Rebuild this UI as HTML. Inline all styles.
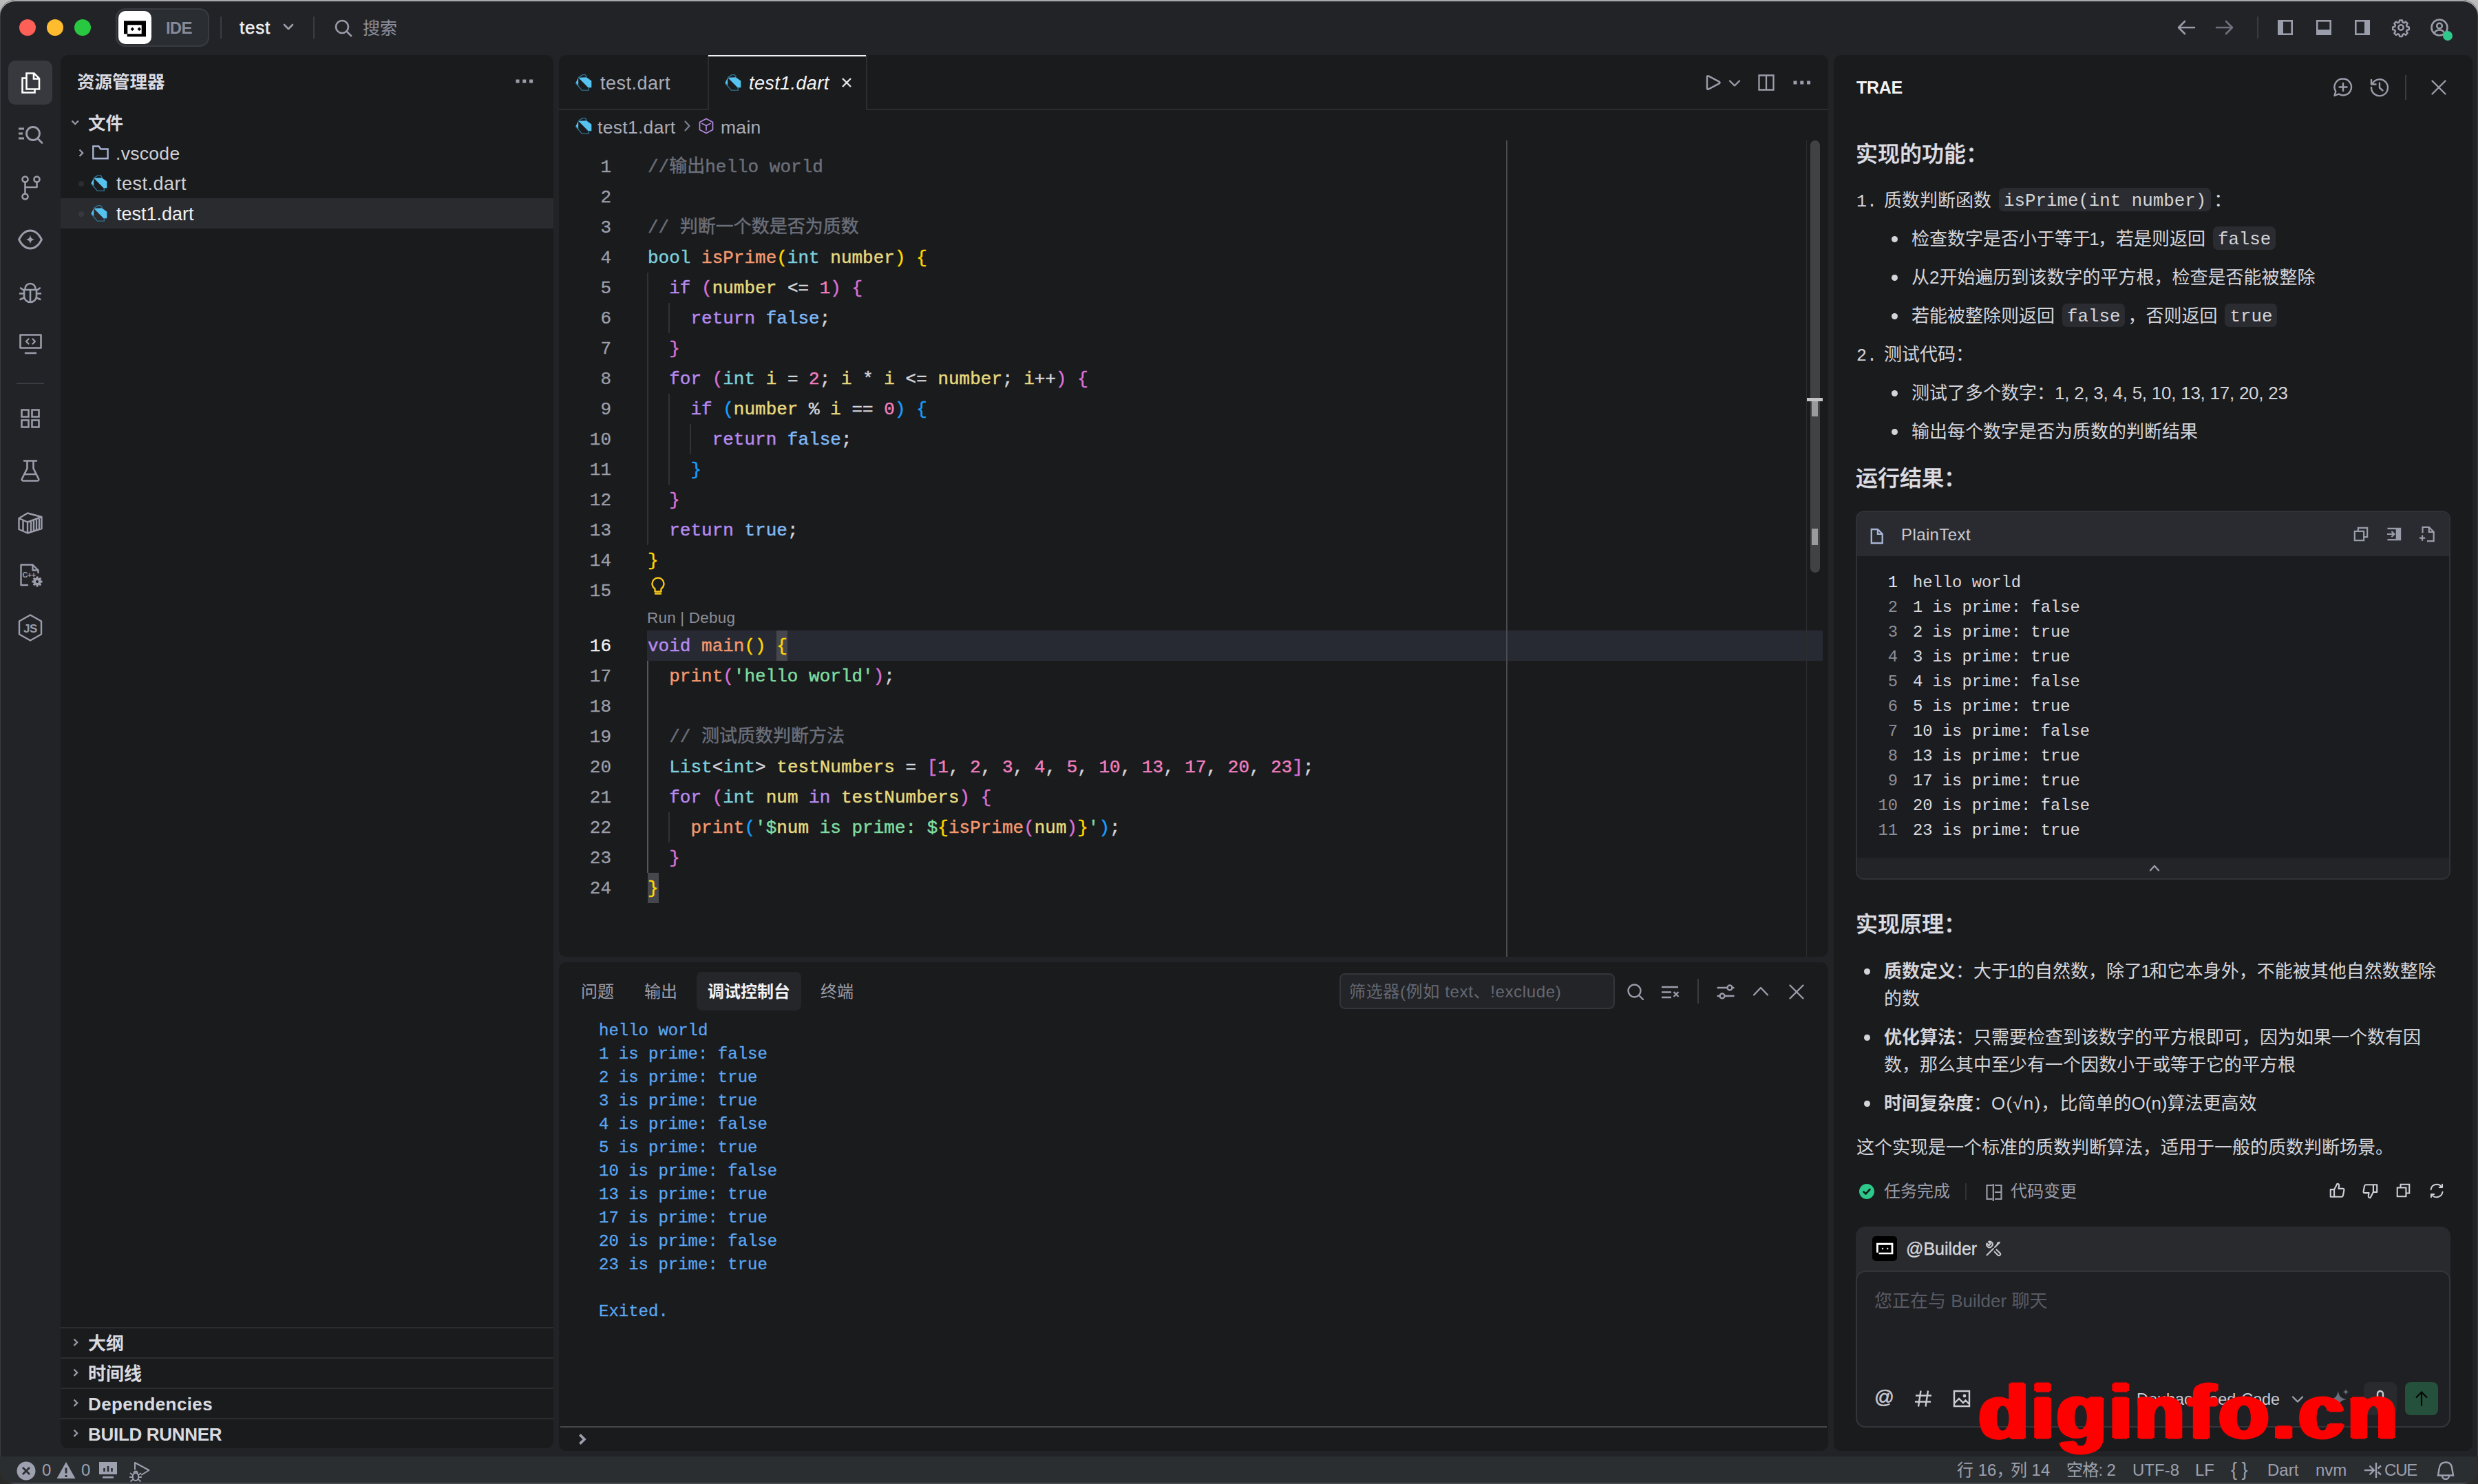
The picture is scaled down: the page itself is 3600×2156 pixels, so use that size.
<!DOCTYPE html>
<html lang="zh-CN">
<head>
<meta charset="utf-8">
<title>test1.dart — test</title>
<style>
*{box-sizing:border-box;margin:0;padding:0}
html,body{width:3600px;height:2156px;overflow:hidden;background:linear-gradient(#bdbdbd,#9a9a9a 3%,#2a2a28 97%)}
body{font-family:"Liberation Sans","Noto Sans CJK SC",sans-serif;color:#d4d5db;-webkit-font-smoothing:antialiased}
#win{position:absolute;left:0;top:0;width:3600px;height:2156px;background:#222327;border-radius:22px 22px 22px 22px;overflow:hidden;box-shadow:inset 0 2px 0 #a9a9ab, inset 1px 0 0 #3a3c41, inset -1px 0 0 #3a3c41}
.abs{position:absolute}
.t{position:absolute;white-space:nowrap;line-height:1}
.panel{position:absolute;background:#1a1b1d;border-radius:11px}
svg{position:absolute;overflow:visible}
.ic{fill:none;stroke:#9a9daa;stroke-width:2.6;stroke-linecap:round;stroke-linejoin:round}
.mono{font-family:"Liberation Mono","Noto Sans CJK SC",monospace}
.b{font-weight:bold}
/* code colors */
.cm{color:#6b6f7a}.ty{color:#7dd0dc}.fn{color:#f2996f}.va{color:#e6d97e}.kw{color:#b78af0}.bo{color:#7eb8f7}.nu{color:#f07fbf}.st{color:#7fdca0}
.b1{color:#ffd700}.b2{color:#da70d6}.b3{color:#179fff}.op{color:#d4d5db}
.ln{position:absolute;left:812px;width:76px;text-align:right;font-size:26px;line-height:46px;-webkit-text-stroke:.3px;height:44px;color:#9c9faa;white-space:pre}
.cl{position:absolute;left:941px;font-size:26px;line-height:46px;-webkit-text-stroke:.45px;height:44px;white-space:pre;color:#d4d5db}
.ig{position:absolute;width:2px;background:#303236}
.con{position:absolute;left:870px;font-size:24px;line-height:38px;-webkit-text-stroke:.3px;height:34px;white-space:pre;color:#5ba6f2}
.rl{position:absolute;font-size:26px;line-height:40px;white-space:nowrap;color:#d4d5db}
.h3{position:absolute;left:2696px;font-size:32px;font-weight:500;line-height:43px;color:#dcdde3;white-space:nowrap;-webkit-text-stroke:.4px}
.icode{font-family:"Liberation Mono",monospace;font-size:25.8px;background:#2a2c31;border-radius:7px;padding:4.600px 7px .6px 7px;margin:0 4px;position:relative;top:-1.400px}
.n1{margin:0 -1.800px}
.dot{position:absolute;width:9px;height:9px;border-radius:50%;background:#d4d5db}
.pl{position:absolute;font-size:23.8px;line-height:38px;height:36px;white-space:pre;color:#d9dae0}
.pn{position:absolute;left:2697px;width:60px;text-align:right;font-size:23.8px;line-height:38px;height:36px;color:#8b8e99}
.sb{position:absolute;font-size:24px;line-height:40px;top:2116px;color:#9da0ae;white-space:nowrap}
</style>
</head>
<body>
<div id="win">
<svg width="0" height="0" style="position:absolute"><defs>
<g id="dartico"><path d="M4.200 4.700L16 4.200l7.300 5.300v9.700h-4.800z" fill="#55c2f0"/><path d="M0.300 12.500l3.900-7.800v12.500z" fill="#55c2f0"/><path d="M4.200 4.700l6.300-4.100h3.700l2.300 3.600M.5 12.800l8.800 10.300h10v-4" fill="none" stroke="#2f7191" stroke-width="1.400" stroke-linejoin="round"/></g>
</defs></svg>
<!-- ===== title bar ===== -->
<div class="abs" style="left:28px;top:28px;width:24px;height:24px;border-radius:50%;background:#fe5f57"></div>
<div class="abs" style="left:68px;top:28px;width:24px;height:24px;border-radius:50%;background:#febc2e"></div>
<div class="abs" style="left:108px;top:28px;width:24px;height:24px;border-radius:50%;background:#28c840"></div>
<div class="abs" style="left:168px;top:12px;width:136px;height:56px;border-radius:14px;background:#2a2d31;border:2px solid #383b40"></div>
<div class="abs" style="left:172px;top:16px;width:48px;height:48px;border-radius:10px;background:#fff"></div>
<svg style="left:172px;top:16px" width="48" height="48" viewBox="0 0 48 48"><path d="M8 14.300h32v23H12.700v-4.100H8z M13.300 20.200v13h20.400v-13z" fill="#000" fill-rule="evenodd"/><path d="M20.300 23.600l2.700 2.700-2.700 2.700-2.700-2.700z M30.300 23.600l2.700 2.700-2.700 2.700-2.700-2.700z" fill="#000"/></svg>
<div class="t" style="left:241px;top:29px;font-size:24px;font-weight:bold;color:#878a99;letter-spacing:-.8px">IDE</div>
<div class="abs" style="left:320px;top:24px;width:2px;height:32px;background:#3a3c42"></div>
<div class="t" style="left:348px;top:27px;font-size:26px;color:#f0f0f3;letter-spacing:.8px;-webkit-text-stroke:.5px">test</div>
<svg style="left:410px;top:33px" width="18" height="12" viewBox="0 0 18 12"><path class="ic" d="M3 3l6 6 6-6"/></svg>
<div class="abs" style="left:455px;top:24px;width:2px;height:32px;background:#3a3c42"></div>
<svg style="left:485px;top:27px" width="28" height="28" viewBox="0 0 28 28"><circle class="ic" cx="12" cy="12" r="9"/><path class="ic" d="M19 19l6 6"/></svg>
<div class="t" style="left:527px;top:29px;font-size:25px;color:#8b8e9c">搜索</div>
<!-- right controls -->
<svg style="left:3162px;top:28px" width="28" height="24" viewBox="0 0 28 24"><path class="ic" d="M26 12H3M12 3l-9 9 9 9"/></svg>
<svg style="left:3218px;top:28px" width="28" height="24" viewBox="0 0 28 24"><path class="ic" style="stroke:#6f727e" d="M2 12h23M16 3l9 9-9 9"/></svg>
<div class="abs" style="left:3279px;top:24px;width:2px;height:32px;background:#3a3c42"></div>
<svg style="left:3309px;top:29px" width="22" height="22" viewBox="0 0 22 22"><rect x="1.3" y="1.3" width="19.4" height="19.4" fill="none" stroke="#9a9daa" stroke-width="2.6"/><rect x="1" y="1" width="7" height="20" fill="#9a9daa"/></svg>
<svg style="left:3365px;top:29px" width="22" height="22" viewBox="0 0 22 22"><rect x="1.3" y="1.3" width="19.4" height="19.4" fill="none" stroke="#9a9daa" stroke-width="2.6"/><rect x="1" y="14" width="20" height="7" fill="#9a9daa"/></svg>
<svg style="left:3421px;top:29px" width="22" height="22" viewBox="0 0 22 22"><rect x="1.3" y="1.3" width="19.4" height="19.4" fill="none" stroke="#9a9daa" stroke-width="2.6"/><rect x="14" y="1" width="7" height="20" fill="#9a9daa"/></svg>
<svg style="left:3475px;top:27px" width="26" height="26" viewBox="0 0 24 24"><path class="ic" style="stroke-width:2.3" d="M10.3 2.2h3.4l.6 2.7 1.9.8 2.3-1.5 2.4 2.4-1.5 2.3.8 1.9 2.7.6v3.4l-2.7.6-.8 1.9 1.5 2.3-2.4 2.4-2.3-1.5-1.9.8-.6 2.7h-3.4l-.6-2.7-1.9-.8-2.3 1.5-2.4-2.4 1.5-2.3-.8-1.9-2.7-.6v-3.4l2.7-.6.8-1.9-1.5-2.3 2.4-2.4 2.3 1.5 1.9-.8z"/><circle class="ic" style="stroke-width:2.3" cx="12" cy="12" r="3.4"/></svg>
<svg style="left:3531px;top:27px" width="26" height="26" viewBox="0 0 26 26"><circle class="ic" cx="13" cy="13" r="11.5"/><circle class="ic" cx="13" cy="10.5" r="3.8"/><path class="ic" d="M5.5 21.5c1.5-3.5 4-5 7.5-5s6 1.500 7.500 5"/></svg>
<div class="abs" style="left:3549px;top:45px;width:14px;height:14px;border-radius:50%;background:#2dc98b;"></div>
<!-- ===== activity bar ===== -->
<div class="abs" style="left:12px;top:88px;width:64px;height:64px;border-radius:10px;background:#38393e"></div>
<svg style="left:30px;top:104px" width="30" height="32" viewBox="0 0 30 32"><path d="M8.500 9.500H2.500v21h18v-5" fill="none" stroke="#fff" stroke-width="2.6" stroke-linejoin="miter"/><path d="M8.500 2.500h11l7.500 7.500v15.500h-18.500z M19 2.500v8h8" fill="none" stroke="#fff" stroke-width="2.600" stroke-linejoin="miter"/></svg>
<svg style="left:26px;top:182px" width="38" height="28" viewBox="0 0 38 28"><path class="ic" style="stroke-width:2.8;stroke-linecap:butt" d="M1 5h8M1 12h6M1 19h8"/><circle class="ic" style="stroke-width:2.8" cx="22" cy="12" r="9.500"/><path class="ic" style="stroke-width:2.8" d="M29 19.500l6 6"/></svg>
<svg style="left:31px;top:255px" width="28" height="36" viewBox="0 0 28 36"><circle class="ic" cx="5.500" cy="5.500" r="4"/><circle class="ic" cx="22.500" cy="5.500" r="4"/><circle class="ic" cx="5.500" cy="30.500" r="4"/><path class="ic" d="M5.500 9.500v17M22.500 9.500v7.500H5.500"/></svg>
<svg style="left:26px;top:332px" width="36" height="32" viewBox="0 0 36 32"><path class="ic" style="stroke-width:2.800" d="M1.500 16C6 7 12 3 18 3s12 4 16.500 13C30 25 24 29 18 29S6 25 1.500 16z"/><path d="M18 9.500c.6 4 2.500 5.900 6.500 6.500-4 .6-5.900 2.500-6.500 6.500-.6-4-2.500-5.900-6.500-6.500 4-.6 5.900-2.500 6.500-6.500z" fill="#9a9daa"/></svg>
<svg style="left:27px;top:409px" width="34" height="34" viewBox="0 0 34 34"><path class="ic" d="M9.500 10.500a7.500 7.500 0 0 1 15 0M8 12h18v9.500a9 8.500 0 0 1-18 0zM17 12v18M8 17.500H2M8 23.500l-5.500 2.500M8 13L3 9.500M26 17.500h6M26 23.500l5.500 2.500M26 13l5-3.500"/></svg>
<svg style="left:28px;top:485px" width="34" height="30" viewBox="0 0 34 30"><rect class="ic" x="1.500" y="1.500" width="30" height="19" /><path class="ic" d="M9 28h15"/><path class="ic" style="stroke-width:2.300" d="M13.500 7.500L10 11l3.500 3.500M19.500 7.500L23 11l-3.500 3.500"/></svg>
<div class="abs" style="left:24px;top:556px;width:40px;height:2px;background:#3a3c42"></div>
<svg style="left:30px;top:594px" width="28" height="28" viewBox="0 0 28 28"><path class="ic" style="stroke-linejoin:miter" d="M1.500 1.500h10v10h-10zM16.500 1.500h10v10h-10zM1.500 16.500h10v10h-10zM16.500 16.500h10v10h-10z"/></svg>
<svg style="left:30px;top:668px" width="28" height="32" viewBox="0 0 28 32"><path class="ic" d="M5 1.500h18M9.500 1.500v11L2 27.500c-.8 1.600 0 3 2 3h20c2 0 2.800-1.400 2-3L18.500 12.500v-11M6 21h16"/></svg>
<svg style="left:26px;top:744px" width="36" height="32" viewBox="0 0 36 32"><path class="ic" style="stroke-width:2.400" d="M1.500 9L14 1.500 34.500 7v17L14 30.500 1.500 25zM1.500 9L14 14.500 34.500 7M14 14.500v16M7.500 12v15.500M19 14v14M23 13v14M27 12v14M31 11v14"/></svg>
<svg style="left:28px;top:818px" width="36" height="36" viewBox="0 0 36 36"><path class="ic" style="stroke-width:2.400" d="M12 32H2.500V2.500h17l8 8V14M19.500 2.500v8h8"/><text x="4.500" y="21" font-family="Liberation Sans,sans-serif" font-size="11" font-weight="bold" letter-spacing="-.6" fill="#9a9daa">C++</text><circle cx="26" cy="27" r="4" fill="none" stroke="#9a9daa" stroke-width="3.500"/><path d="M26 19.500v15M18.500 27h15M20.700 21.700l10.600 10.600M31.300 21.700L20.700 32.300" stroke="#9a9daa" stroke-width="3" fill="none"/><circle cx="26" cy="27" r="2" fill="#222327"/></svg>
<svg style="left:26px;top:892px" width="36" height="40" viewBox="0 0 36 40"><path class="ic" style="stroke-width:2.400" d="M18 1.500L34 10.500v19L18 38.500 2 29.500v-19z"/><text x="18" y="27" text-anchor="middle" font-family="Liberation Sans,sans-serif" font-size="17" font-weight="bold" letter-spacing="-.5" fill="#9a9daa">JS</text></svg>
<!-- ===== explorer sidebar ===== -->
<div class="panel" style="left:88px;top:80px;width:716px;height:2024px"></div>
<div class="t b" style="left:112px;top:107px;font-size:25.500px;color:#d9dae0">资源管理器</div>
<svg style="left:749px;top:114px" width="28" height="8" viewBox="0 0 28 8"><path d="M.5 1.500h5v5h-5zM10.300 1.500h5v5h-5zM20.100 1.500h5v5h-5z" fill="#9a9daa"/></svg>
<svg style="left:103px;top:174px" width="13" height="8" viewBox="0 0 13 8"><path class="ic" style="stroke-width:2.200;stroke-linecap:butt;stroke-linejoin:miter" d="M1.500 1.500l4.700 4.700 4.700-4.700"/></svg>
<div class="t b" style="left:128px;top:167px;font-size:25.5px;color:#d9dae0">文件</div>
<svg style="left:114px;top:216px" width="8" height="13" viewBox="0 0 8 13"><path class="ic" style="stroke-width:2.200;stroke-linecap:butt;stroke-linejoin:miter" d="M1.500 1.500l4.700 4.700-4.700 4.700"/></svg>
<svg style="left:134px;top:211px" width="24" height="21" viewBox="0 0 24 21"><path d="M1.300 1.500h8.200l2.800 4h10.300v13.700H1.300z" fill="none" stroke="#a6b3d2" stroke-width="2.400" stroke-linejoin="miter"/></svg>
<div class="t" style="left:168px;top:210px;font-size:26.500px;color:#d0d1d8;letter-spacing:.3px">.vscode</div>
<div class="abs" style="left:114px;top:263px;width:8px;height:8px;border-radius:50%;background:#2c2d31"></div>
<svg class="dart" style="left:132px;top:254px" width="24" height="24" viewBox="0 0 24 24"><use href="#dartico"/></svg>
<div class="t" style="left:169px;top:254px;font-size:27px;color:#d0d1d8;letter-spacing:.5px">test.dart</div>
<div class="abs" style="left:88px;top:288px;width:716px;height:44px;background:#2a2b2f"></div>
<div class="abs" style="left:114px;top:307px;width:8px;height:8px;border-radius:50%;background:#38393e"></div>
<svg class="dart" style="left:132px;top:298px" width="24" height="24" viewBox="0 0 24 24"><use href="#dartico"/></svg>
<div class="t" style="left:169px;top:298px;font-size:27px;color:#f0f0f3;letter-spacing:0">test1.dart</div>
<!-- bottom sections -->
<div class="abs" style="left:88px;top:1928px;width:716px;height:2px;background:#2c2d31"></div>
<div class="abs" style="left:88px;top:1972px;width:716px;height:2px;background:#2c2d31"></div>
<div class="abs" style="left:88px;top:2016px;width:716px;height:2px;background:#2c2d31"></div>
<div class="abs" style="left:88px;top:2060px;width:716px;height:2px;background:#2c2d31"></div>
<svg style="left:106px;top:1944px" width="8" height="13" viewBox="0 0 8 13"><path class="ic" style="stroke-width:2.200;stroke-linecap:butt;stroke-linejoin:miter" d="M1.500 1.500l4.700 4.700-4.700 4.700"/></svg>
<svg style="left:106px;top:1988px" width="8" height="13" viewBox="0 0 8 13"><path class="ic" style="stroke-width:2.200;stroke-linecap:butt;stroke-linejoin:miter" d="M1.500 1.500l4.700 4.700-4.700 4.700"/></svg>
<svg style="left:106px;top:2032px" width="8" height="13" viewBox="0 0 8 13"><path class="ic" style="stroke-width:2.200;stroke-linecap:butt;stroke-linejoin:miter" d="M1.500 1.500l4.700 4.700-4.700 4.700"/></svg>
<svg style="left:106px;top:2076px" width="8" height="13" viewBox="0 0 8 13"><path class="ic" style="stroke-width:2.200;stroke-linecap:butt;stroke-linejoin:miter" d="M1.500 1.500l4.700 4.700-4.700 4.700"/></svg>
<div class="t b" style="left:128px;top:1939px;font-size:26px;color:#d9dae0">大纲</div>
<div class="t b" style="left:128px;top:1983px;font-size:26px;color:#d9dae0">时间线</div>
<div class="t b" style="left:128px;top:2027px;font-size:26px;color:#d9dae0;letter-spacing:.4px">Dependencies</div>
<div class="t b" style="left:128px;top:2071px;font-size:26px;color:#d9dae0;letter-spacing:-.3px">BUILD RUNNER</div>
<!-- ===== editor ===== -->
<div class="panel" style="left:812px;top:80px;width:1844px;height:1310px"></div>
<div class="abs" style="left:812px;top:158px;width:1844px;height:2px;background:#2c2d31"></div>
<div class="abs" style="left:1028px;top:80px;width:2px;height:79px;background:#2c2d31"></div>
<div class="abs" style="left:1030px;top:80px;width:228px;height:80px;background:#1a1b1d"></div>
<div class="abs" style="left:1029px;top:80px;width:230px;height:2px;background:#f2f2f4"></div>
<div class="abs" style="left:1258px;top:80px;width:2px;height:79px;background:#2c2d31"></div>
<svg style="left:836px;top:108px" width="24" height="24" viewBox="0 0 24 24"><use href="#dartico"/></svg>
<div class="t" style="left:872px;top:108px;font-size:27px;color:#a9acb8;letter-spacing:.5px">test.dart</div>
<svg style="left:1053px;top:108px" width="24" height="24" viewBox="0 0 24 24"><use href="#dartico"/></svg>
<div class="t" style="left:1088px;top:108px;font-size:27px;color:#f4f4f6;font-style:italic;letter-spacing:.4px">test1.dart</div>
<svg style="left:1222px;top:112px" width="16" height="16" viewBox="0 0 16 16"><path d="M2 2l12 12M14 2L2 14" stroke="#e6e6ea" stroke-width="2.400" fill="none"/></svg>
<svg style="left:2476px;top:107px" width="26" height="26" viewBox="0 0 26 26"><path class="ic" style="stroke-width:2.400" d="M4 5Q4 2.300 6.400 3.600L21.500 11.600Q23.800 13 21.500 14.400L6.400 22.400Q4 23.700 4 21Z"/></svg>
<svg style="left:2511px;top:115px" width="18" height="12" viewBox="0 0 18 12"><path class="ic" style="stroke-width:2.400" d="M2 2.500l7 7 7-7"/></svg>
<svg style="left:2554px;top:108px" width="24" height="24" viewBox="0 0 24 24"><path class="ic" style="stroke-width:2.300;stroke-linejoin:miter;stroke-linecap:butt" d="M1.500 1.500h21v21h-21zM12 1.500v21"/></svg>
<svg style="left:2605px;top:117px" width="28" height="8" viewBox="0 0 28 8"><path d="M.5 .5h5v5h-5zM10.300 .5h5v5h-5zM20.100 .5h5v5h-5z" fill="#9a9daa"/></svg>
<svg style="left:836px;top:171px" width="24" height="24" viewBox="0 0 24 24"><use href="#dartico"/></svg>
<div class="t" style="left:868px;top:172px;font-size:26.500px;color:#a9acb8;letter-spacing:.3px">test1.dart</div>
<svg style="left:993px;top:174px" width="12" height="18" viewBox="0 0 12 18"><path class="ic" style="stroke-width:2.200;stroke:#7d808c" d="M2.500 2.500l6 6.500-6 6.500"/></svg>
<svg style="left:1014px;top:171px" width="24" height="24" viewBox="0 0 24 24"><path d="M12 1.500l9.500 5v11L12 22.500 2.500 17.500v-11zM6 8.500l6 3 6-3M12 11.500v6.500" fill="none" stroke="#b589e0" stroke-width="1.700" stroke-linejoin="round" stroke-linecap="round"/></svg>
<div class="t" style="left:1047px;top:172px;font-size:26.500px;color:#a9acb8;letter-spacing:.3px">main</div>
<div class="abs" style="left:940px;top:916px;width:1708px;height:44px;background:#282a33"></div>
<div class="abs" style="left:2188px;top:204px;width:2px;height:1186px;background:#4a4c52"></div>
<div class="abs" style="left:2624px;top:204px;width:1px;height:1186px;background:#2c2d31"></div>
<div class="abs" style="left:2630px;top:204px;width:14px;height:628px;border-radius:7px;background:#414244"></div>
<div class="abs" style="left:2632px;top:583px;width:9px;height:22px;background:#9b9b9d"></div>
<div class="abs" style="left:2625px;top:578px;width:23px;height:5px;background:#c4c4c6"></div>
<div class="abs" style="left:2632px;top:768px;width:9px;height:24px;background:#9b9b9d"></div>
<div class="ig" style="left:940px;top:396px;height:396px;background:#303236"></div>
<div class="ig" style="left:971.2px;top:440px;height:44px;background:#303236"></div>
<div class="ig" style="left:971.2px;top:572px;height:132px;background:#303236"></div>
<div class="ig" style="left:1002.4px;top:616px;height:44px;background:#303236"></div>
<div class="ig" style="left:940px;top:960px;height:308px;background:#55575d"></div>
<div class="ig" style="left:971.2px;top:1180px;height:44px;background:#303236"></div>
<div class="ln mono" style="top:220px">1</div>
<div class="cl mono" style="top:220px"><span class="cm">//输出hello world</span></div>
<div class="ln mono" style="top:264px">2</div>
<div class="ln mono" style="top:308px">3</div>
<div class="cl mono" style="top:308px"><span class="cm">// 判断一个数是否为质数</span></div>
<div class="ln mono" style="top:352px">4</div>
<div class="cl mono" style="top:352px"><span class="ty">bool</span> <span class="fn">isPrime</span><span class="b1">(</span><span class="ty">int</span> <span class="va">number</span><span class="b1">)</span> <span class="b1">{</span></div>
<div class="ln mono" style="top:396px">5</div>
<div class="cl mono" style="top:396px">  <span class="kw">if</span> <span class="b2">(</span><span class="va">number</span> &lt;= <span class="nu">1</span><span class="b2">)</span> <span class="b2">{</span></div>
<div class="ln mono" style="top:440px">6</div>
<div class="cl mono" style="top:440px">    <span class="kw">return</span> <span class="bo">false</span>;</div>
<div class="ln mono" style="top:484px">7</div>
<div class="cl mono" style="top:484px">  <span class="b2">}</span></div>
<div class="ln mono" style="top:528px">8</div>
<div class="cl mono" style="top:528px">  <span class="kw">for</span> <span class="b2">(</span><span class="ty">int</span> <span class="va">i</span> = <span class="nu">2</span>; <span class="va">i</span> * <span class="va">i</span> &lt;= <span class="va">number</span>; <span class="va">i</span>++<span class="b2">)</span> <span class="b2">{</span></div>
<div class="ln mono" style="top:572px">9</div>
<div class="cl mono" style="top:572px">    <span class="kw">if</span> <span class="b3">(</span><span class="va">number</span> % <span class="va">i</span> == <span class="nu">0</span><span class="b3">)</span> <span class="b3">{</span></div>
<div class="ln mono" style="top:616px">10</div>
<div class="cl mono" style="top:616px">      <span class="kw">return</span> <span class="bo">false</span>;</div>
<div class="ln mono" style="top:660px">11</div>
<div class="cl mono" style="top:660px">    <span class="b3">}</span></div>
<div class="ln mono" style="top:704px">12</div>
<div class="cl mono" style="top:704px">  <span class="b2">}</span></div>
<div class="ln mono" style="top:748px">13</div>
<div class="cl mono" style="top:748px">  <span class="kw">return</span> <span class="bo">true</span>;</div>
<div class="ln mono" style="top:792px">14</div>
<div class="cl mono" style="top:792px"><span class="b1">}</span></div>
<div class="ln mono" style="top:836px">15</div>
<div class="ln mono" style="top:916px;color:#f0f0f3">16</div>
<div class="cl mono" style="top:916px"><span class="kw">void</span> <span class="fn">main</span><span class="b1">()</span> <span class="b1" style="display:inline-block;height:44px;vertical-align:top;background:#45474d">{</span></div>
<div class="ln mono" style="top:960px">17</div>
<div class="cl mono" style="top:960px">  <span class="fn">print</span><span class="b2">(</span><span class="st">'hello world'</span><span class="b2">)</span>;</div>
<div class="ln mono" style="top:1004px">18</div>
<div class="ln mono" style="top:1048px">19</div>
<div class="cl mono" style="top:1048px">  <span class="cm">// 测试质数判断方法</span></div>
<div class="ln mono" style="top:1092px">20</div>
<div class="cl mono" style="top:1092px">  <span class="ty">List</span>&lt;<span class="ty">int</span>&gt; <span class="va">testNumbers</span> = <span class="b2">[</span><span class="nu">1</span>, <span class="nu">2</span>, <span class="nu">3</span>, <span class="nu">4</span>, <span class="nu">5</span>, <span class="nu">10</span>, <span class="nu">13</span>, <span class="nu">17</span>, <span class="nu">20</span>, <span class="nu">23</span><span class="b2">]</span>;</div>
<div class="ln mono" style="top:1136px">21</div>
<div class="cl mono" style="top:1136px">  <span class="kw">for</span> <span class="b2">(</span><span class="ty">int</span> <span class="va">num</span> <span class="kw">in</span> <span class="va">testNumbers</span><span class="b2">)</span> <span class="b2">{</span></div>
<div class="ln mono" style="top:1180px">22</div>
<div class="cl mono" style="top:1180px">    <span class="fn">print</span><span class="b3">(</span><span class="st">'$</span><span class="va">num</span><span class="st"> is prime: $</span><span class="b1">{</span><span class="fn">isPrime</span><span class="b2">(</span><span class="va">num</span><span class="b2">)</span><span class="b1">}</span><span class="st">'</span><span class="b3">)</span>;</div>
<div class="ln mono" style="top:1224px">23</div>
<div class="cl mono" style="top:1224px">  <span class="b2">}</span></div>
<div class="ln mono" style="top:1268px">24</div>
<div class="cl mono" style="top:1268px"><span class="b1" style="display:inline-block;height:44px;vertical-align:top;background:#45474d">}</span></div>
<svg style="left:946px;top:838px" width="20" height="28" viewBox="0 0 20 28"><path d="M5.500 17.500C3 15.500 1.500 13 1.500 10a8.500 8.500 0 0 1 17 0c0 3-1.500 5.500-4 7.500v4h-9zM6 24.500h8M7.500 21.500h5" fill="none" stroke="#f5c518" stroke-width="2.400" stroke-linejoin="round" stroke-linecap="round"/></svg>
<div class="t" style="left:940px;top:887px;font-size:22.500px;color:#8a8d98;letter-spacing:.2px">Run | Debug</div>
<!-- ===== bottom panel ===== -->
<div class="panel" style="left:812px;top:1398px;width:1844px;height:710px"></div>
<div class="t" style="left:844px;top:1429px;font-size:24px;color:#9a9daa">问题</div>
<div class="t" style="left:936px;top:1429px;font-size:24px;color:#9a9daa">输出</div>
<div class="abs" style="left:1012px;top:1412px;width:152px;height:56px;border-radius:8px;background:#25262a"></div>
<div class="t b" style="left:1028px;top:1429px;font-size:24px;color:#f2f2f4">调试控制台</div>
<div class="t" style="left:1192px;top:1429px;font-size:24px;color:#9a9daa">终端</div>
<div class="abs" style="left:1946px;top:1414px;width:400px;height:52px;border-radius:8px;background:#222428;border:2px solid #33353a"></div>
<div class="t" style="left:1960px;top:1429px;font-size:24px;color:#656872;letter-spacing:.65px">筛选器(例如 text、!exclude)</div>
<svg style="left:2363px;top:1428px" width="26" height="26" viewBox="0 0 26 26"><circle class="ic" style="stroke-width:2.400" cx="11.500" cy="11.500" r="9"/><path class="ic" style="stroke-width:2.400" d="M18 18l6 6"/></svg>
<svg style="left:2413px;top:1431px" width="28" height="22" viewBox="0 0 28 22"><path class="ic" style="stroke-width:2.400;stroke-linecap:butt" d="M1 3h24M1 10.500h14M1 18h14M18.500 10l7 7M25.500 10l-7 7"/></svg>
<div class="abs" style="left:2466px;top:1422px;width:2px;height:36px;background:#3a3c42"></div>
<svg style="left:2494px;top:1428px" width="26" height="26" viewBox="0 0 26 26"><path class="ic" style="stroke-width:2.400" d="M1.500 7h14M22.500 7h2M1.500 19h3M11.500 19h13"/><circle class="ic" style="stroke-width:2.400" cx="19" cy="7" r="3.500"/><circle class="ic" style="stroke-width:2.400" cx="8" cy="19" r="3.500"/></svg>
<svg style="left:2546px;top:1432px" width="24" height="16" viewBox="0 0 24 16"><path class="ic" style="stroke-width:2.400" d="M2 13.500L12 3l10 10.500"/></svg>
<svg style="left:2599px;top:1430px" width="22" height="22" viewBox="0 0 22 22"><path class="ic" style="stroke-width:2.400" d="M1.500 1.500l19 19M20.500 1.500l-19 19"/></svg>
<div class="con mono" style="top:1479px">hello world</div>
<div class="con mono" style="top:1513px">1 is prime: false</div>
<div class="con mono" style="top:1547px">2 is prime: true</div>
<div class="con mono" style="top:1581px">3 is prime: true</div>
<div class="con mono" style="top:1615px">4 is prime: false</div>
<div class="con mono" style="top:1649px">5 is prime: true</div>
<div class="con mono" style="top:1683px">10 is prime: false</div>
<div class="con mono" style="top:1717px">13 is prime: true</div>
<div class="con mono" style="top:1751px">17 is prime: true</div>
<div class="con mono" style="top:1785px">20 is prime: false</div>
<div class="con mono" style="top:1819px">23 is prime: true</div>
<div class="con mono" style="top:1887px">Exited.</div>
<div class="abs" style="left:814px;top:2072px;width:1840px;height:2px;background:#47484d"></div>
<svg style="left:840px;top:2082px" width="12" height="18" viewBox="0 0 12 18"><path class="ic" style="stroke-width:3.800;stroke-linecap:butt;stroke-linejoin:miter" d="M2.400 2.400l6.600 6.600-6.600 6.600"/></svg>
<!-- ===== TRAE chat panel ===== -->
<div class="panel" style="left:2664px;top:80px;width:928px;height:2028px"></div>
<div class="t b" style="left:2697px;top:115px;font-size:25px;color:#f2f2f4;letter-spacing:-.3px">TRAE</div>
<svg style="left:3389px;top:112px" width="30" height="30" viewBox="0 0 30 30"><path class="ic" style="stroke-width:2.400" d="M15 2.500a12 12 0 1 1-6.500 22.100L2.500 27l1.800-6.200A12 12 0 0 1 15 2.500zM15 9v11M9.500 14.500h11"/></svg>
<svg style="left:3442px;top:112px" width="30" height="30" viewBox="0 0 30 30"><path class="ic" style="stroke-width:2.400" d="M4.500 9.500A12 12 0 1 1 3 15M3 4v6.500h6.500M15 8.500v7l4.500 4"/></svg>
<div class="abs" style="left:3494px;top:109px;width:2px;height:36px;background:#3a3c42"></div>
<svg style="left:3532px;top:116px" width="22" height="22" viewBox="0 0 22 22"><path class="ic" style="stroke-width:2.400" d="M1.500 1.500l19 19M20.500 1.500l-19 19"/></svg>
<div class="h3" style="top:203px">实现的功能：</div>
<div class="rl" style="left:2697px;top:271px"><span class="mono" style="font-size:25px">1.</span></div>
<div class="rl" style="left:2737px;top:271px">质数判断函数<span class="icode" style="margin-left:11px">isPrime(int number)</span>：</div>
<div class="dot" style="left:2748px;top:343px"></div>
<div class="rl" style="left:2777px;top:327px">检查数字是否小于等于<span class="n1">1</span>，若是则返回<span class="icode" style="margin-left:11px">false</span></div>
<div class="dot" style="left:2748px;top:399px"></div>
<div class="rl" style="left:2777px;top:383px">从2开始遍历到该数字的平方根，检查是否能被整除</div>
<div class="dot" style="left:2748px;top:455px"></div>
<div class="rl" style="left:2777px;top:439px">若能被整除则返回<span class="icode" style="margin-left:11px">false</span>，否则返回<span class="icode" style="margin-left:11px">true</span></div>
<div class="rl" style="left:2697px;top:495px"><span class="mono" style="font-size:25px">2.</span></div>
<div class="rl" style="left:2737px;top:495px">测试代码：</div>
<div class="dot" style="left:2748px;top:567px"></div>
<div class="rl" style="left:2777px;top:551px">测试了多个数字：<span style="letter-spacing:-.25px">1, 2, 3, 4, 5, 10, 13, 17, 20, 23</span></div>
<div class="dot" style="left:2748px;top:623px"></div>
<div class="rl" style="left:2777px;top:607px">输出每个数字是否为质数的判断结果</div>
<div class="h3" style="top:674px">运行结果：</div>
<div class="abs" style="left:2696px;top:742px;width:864px;height:536px;border-radius:12px;background:#1b1c1f;border:2px solid #303237;overflow:hidden"><div class="abs" style="left:0;top:0;width:864px;height:64px;background:#292b30"></div><div class="abs" style="left:0;top:502px;width:864px;height:34px;background:#222428"></div></div>
<svg style="left:2717px;top:767px" width="20" height="24" viewBox="0 0 22 26"><path class="ic" style="stroke:#a6b3d2;stroke-width:2.600;stroke-linejoin:miter" d="M2 2h10l7.500 7.500V24H2zM12 2v7.500h7.500"/></svg>
<div class="t" style="left:2762px;top:765px;font-size:24px;color:#c9cad2;letter-spacing:.4px">PlainText</div>
<svg style="left:3419px;top:765px" width="22" height="22" viewBox="0 0 24 24"><path class="ic" style="stroke-width:2.400;stroke-linejoin:miter;stroke-linecap:butt" d="M7.500 7.500V2h14.500v14.500h-5.500M2 7.500h14.500V22H2z"/></svg>
<svg style="left:3467px;top:766px" width="22" height="20" viewBox="0 0 24 22"><path class="ic" style="stroke-width:2.400;stroke-linejoin:miter;stroke-linecap:butt" d="M1.500 2h20.500v18H1.500M1 11h11M8 6.500l4.500 4.500L8 15.500"/><rect x="15" y="2" width="7" height="18" fill="#9a9daa"/></svg>
<svg style="left:3514px;top:764px" width="24" height="24" viewBox="0 0 26 26"><path class="ic" style="stroke-width:2.400;stroke-linejoin:miter;stroke-linecap:butt" d="M6 11V2h10l7.500 7.500V24H13M16 2v7.500h7.500M1 19h9M5.500 14.500v9"/></svg>
<div class="pn mono" style="top:828px;color:#e6e7eb">1</div><div class="pl mono" style="left:2779px;top:828px">hello world</div>
<div class="pn mono" style="top:864px">2</div><div class="pl mono" style="left:2779px;top:864px">1 is prime: false</div>
<div class="pn mono" style="top:900px">3</div><div class="pl mono" style="left:2779px;top:900px">2 is prime: true</div>
<div class="pn mono" style="top:936px">4</div><div class="pl mono" style="left:2779px;top:936px">3 is prime: true</div>
<div class="pn mono" style="top:972px">5</div><div class="pl mono" style="left:2779px;top:972px">4 is prime: false</div>
<div class="pn mono" style="top:1008px">6</div><div class="pl mono" style="left:2779px;top:1008px">5 is prime: true</div>
<div class="pn mono" style="top:1044px">7</div><div class="pl mono" style="left:2779px;top:1044px">10 is prime: false</div>
<div class="pn mono" style="top:1080px">8</div><div class="pl mono" style="left:2779px;top:1080px">13 is prime: true</div>
<div class="pn mono" style="top:1116px">9</div><div class="pl mono" style="left:2779px;top:1116px">17 is prime: true</div>
<div class="pn mono" style="top:1152px">10</div><div class="pl mono" style="left:2779px;top:1152px">20 is prime: false</div>
<div class="pn mono" style="top:1188px">11</div><div class="pl mono" style="left:2779px;top:1188px">23 is prime: true</div>
<svg style="left:3122px;top:1255px" width="16" height="12" viewBox="0 0 16 12"><path class="ic" style="stroke-width:2.400" d="M2 9.500l6-6.500 6 6.500"/></svg>
<div class="h3" style="top:1322px">实现原理：</div>
<div class="dot" style="left:2708px;top:1407px"></div>
<div class="rl" style="left:2737px;top:1391px"><b>质数定义</b>：大于<span class="n1">1</span>的自然数，除了<span class="n1">1</span>和它本身外，不能被其他自然数整除</div>
<div class="rl" style="left:2737px;top:1431px">的数</div>
<div class="dot" style="left:2708px;top:1503px"></div>
<div class="rl" style="left:2737px;top:1487px"><b>优化算法</b>：只需要检查到该数字的平方根即可，因为如果一个数有因</div>
<div class="rl" style="left:2737px;top:1527px">数，那么其中至少有一个因数小于或等于它的平方根</div>
<div class="dot" style="left:2708px;top:1599px"></div>
<div class="rl" style="left:2737px;top:1583px"><b>时间复杂度</b>：<span style="letter-spacing:1.2px">O(√n)，</span>比简单的O(n)算法更高效</div>
<div class="rl" style="left:2697px;top:1647px">这个实现是一个标准的质数判断算法，适用于一般的质数判断场景。</div>
<div class="abs" style="left:2701px;top:1720px;width:22px;height:22px;border-radius:50%;background:#2dc98b"></div>
<svg style="left:2701px;top:1720px" width="22" height="22" viewBox="0 0 22 22"><path d="M6.500 11.500l3 3 6-6.500" fill="none" stroke="#10241c" stroke-width="2.600" stroke-linecap="round" stroke-linejoin="round"/></svg>
<div class="t" style="left:2737px;top:1719px;font-size:24px;color:#9a9daa">任务完成</div>
<div class="abs" style="left:2855px;top:1719px;width:2px;height:24px;background:#303237"></div>
<svg style="left:2885px;top:1720px" width="24" height="24" viewBox="0 0 24 24"><path class="ic" style="stroke-width:2.200;stroke-linecap:butt;stroke-linejoin:miter" d="M9.500 2H1.500v20h8M10.800 0v25M13 2h9.500v20H13M13 12h9.500"/></svg>
<div class="t" style="left:2921px;top:1719px;font-size:24px;color:#9a9daa">代码变更</div>
<svg style="left:3384px;top:1718px" width="23" height="23" viewBox="0 0 26 26"><path class="ic" style="stroke:#cfd0d8;stroke-width:2.400" d="M8 11.500l5-9.500c2.200 0 3.500 1.500 3 4l-.8 4h7c1.500 0 2.300 1 2 2.500l-1.700 9c-.3 1.200-1 2-2.300 2H8zM8 11.500H2V23.500h6"/></svg>
<svg style="left:3432px;top:1719px" width="23" height="23" viewBox="0 0 26 26"><path class="ic" style="stroke:#cfd0d8;stroke-width:2.400" d="M18 14.500l-5 9.500c-2.200 0-3.500-1.500-3-4l.8-4h-7c-1.500 0-2.300-1-2-2.500l1.700-9c.3-1.200 1-2 2.300-2H18zM18 14.500h6V2.500h-6"/></svg>
<svg style="left:3481px;top:1719px" width="21" height="21" viewBox="0 0 24 24"><path class="ic" style="stroke:#cfd0d8;stroke-width:2.400;stroke-linejoin:miter;stroke-linecap:butt" d="M7.500 7.500V2h14.500v14.500h-5.500M2 7.500h14.500V22H2z"/></svg>
<svg style="left:3529px;top:1719px" width="22" height="22" viewBox="0 0 26 26"><path class="ic" style="stroke:#cfd0d8;stroke-width:2.400" d="M3 11a10.200 10.200 0 0 1 18.500-4.500M23 15a10.200 10.200 0 0 1-18.500 4.500M22.500 2v5h-5M3.500 24v-5h5"/></svg>
<div class="abs" style="left:2696px;top:1782px;width:864px;height:292px;border-radius:14px;background:#292a2e"></div>
<div class="abs" style="left:2696px;top:1846px;width:864px;height:228px;border-radius:14px;background:#1f2024;border:2px solid #33353a"></div>
<div class="abs" style="left:2720px;top:1796px;width:36px;height:36px;border-radius:5px;background:#000"></div>
<svg style="left:2720px;top:1796px" width="36" height="36" viewBox="0 0 48 48"><path d="M8 13.100h32.500v21.800H12.700v-3.400H8z M11.700 17.100v14.400h25.100v-14.400z" fill="#fff" fill-rule="evenodd"/><path d="M20 22l2 2-2 2-2-2z M29.700 22l2 2-2 2-2-2z" fill="#fff"/></svg>
<div class="t" style="left:2769px;top:1802px;font-size:25px;color:#d4d5db;letter-spacing:0;-webkit-text-stroke:.4px">@Builder</div>
<svg style="left:2884px;top:1802px" width="24" height="24" viewBox="0 0 24 24"><path class="ic" style="stroke:#c9cad2;stroke-width:2" d="M3 21l9-9M14 10l7-7M21 3l-2.500.5-1 2M16.500 13.500l5 5a2 2 0 0 1-3 3l-5-5M10.500 7.500a4.200 4.200 0 0 0-5.500-5.500l3 3-2.500 2.500-3-3a4.200 4.200 0 0 0 5.500 5.500zM2.500 21.500l1-1"/></svg>
<div class="t" style="left:2723px;top:1877px;font-size:26px;color:#585b65;letter-spacing:0">您正在与 Builder 聊天</div>
<div class="t" style="left:2723px;top:2015px;font-size:28.500px;color:#c9cad2;-webkit-text-stroke:.5px">@</div>
<svg style="left:2781px;top:2019px" width="26" height="26" viewBox="0 0 26 26"><path class="ic" style="stroke:#c9cad2;stroke-width:2.400;stroke-linecap:butt" d="M9.500 1.500L6 24.500M20 1.500l-3.500 23M2 8.500h23M1 17.500h23"/></svg>
<svg style="left:2837px;top:2019px" width="26" height="26" viewBox="0 0 26 26"><path class="ic" style="stroke:#c9cad2;stroke-width:2.400;stroke-linejoin:miter" d="M2 2h22v22H2zM2 20l7-7 6 6 3.500-3.500 5.500 5.500"/><circle cx="17" cy="9" r="2.400" fill="#c9cad2"/></svg>
<div class="t" style="left:3104px;top:2022px;font-size:23.400px;color:#c9cad2;letter-spacing:0">Doubao-Seed-Code</div>
<svg style="left:3329px;top:2027px" width="18" height="12" viewBox="0 0 18 12"><path class="ic" style="stroke-width:2.400" d="M2 2.500l7 7 7-7"/></svg>
<svg style="left:3383px;top:2014px" width="34" height="34" viewBox="0 0 34 34"><path d="M13.800 6.500c1.200 8 4 11 11.800 12.500-7.800 1.500-10.600 4.500-11.800 12.500C12.600 23.500 9.800 20.500 2 19c7.800-1.500 10.600-4.500 11.800-12.500zM25 3.700c.5 3 1.500 4 4.500 4.500-3 .5-4 1.500-4.500 4.500-.5-3-1.500-4-4.500-4.500 3-.5 4-1.500 4.500-4.500z" fill="#6b6f7c"/></svg>
<div class="abs" style="left:3434px;top:2008px;width:48px;height:48px;border-radius:8px;background:#292a2e"></div>
<svg style="left:3446px;top:2019px" width="24" height="28" viewBox="0 0 24 28"><path class="ic" style="stroke:#c9cad2;stroke-width:2.400" d="M12 2a4 4 0 0 1 4 4v7a4 4 0 0 1-8 0V6a4 4 0 0 1 4-4zM3.500 13a8.500 8.500 0 0 0 17 0M12 21.500v5"/></svg>
<div class="abs" style="left:3494px;top:2008px;width:48px;height:48px;border-radius:8px;background:#24503c"></div>
<svg style="left:3506px;top:2019px" width="24" height="26" viewBox="0 0 24 26"><path d="M12 23.500V3.500M4 11.500L12 3.500l8 8" fill="none" stroke="#050806" stroke-width="2.200" stroke-linecap="butt" stroke-linejoin="miter"/></svg>
<div class="t b" id="wm" style="left:2875px;top:1997px;font-size:109px;color:#ff0000;letter-spacing:4px;-webkit-text-stroke:3px #ff0000;text-shadow:-4px 0 0 #f00,-2px 0 0 #f00,2px 0 0 #f00,4px 0 0 #f00;transform-origin:0 0;transform:scaleX(1.08)">digi<span style="letter-spacing:5.2px">nfo.cn</span></div>
<!-- ===== status bar ===== -->
<div class="abs" style="left:0;top:2116px;width:3600px;height:40px;background:#2a2e31;box-shadow:inset 0 -2px 0 #45484c"></div>
<svg style="left:24px;top:2123px" width="28" height="28" viewBox="0 0 28 28"><circle cx="14" cy="14" r="13.500" fill="#9da0ae"/><path d="M9 9l10 10M19 9L9 19" stroke="#2a2e31" stroke-width="2.800" fill="none"/></svg>
<div class="sb" style="left:61px">0</div>
<svg style="left:82px;top:2123px" width="28" height="26" viewBox="0 0 28 26"><path d="M14 1L27.500 25H.5z" fill="#9da0ae"/><path d="M14 9.500v8M14 20v3" stroke="#2a2e31" stroke-width="2.800" fill="none"/></svg>
<div class="sb" style="left:118px">0</div>
<svg style="left:144px;top:2124px" width="26" height="26" viewBox="0 0 26 26"><rect x="0" y="0" width="26" height="18" fill="#9da0ae"/><path d="M7.500 9v5M13 6v8M18.500 9v5" stroke="#2a2e31" stroke-width="2.600" fill="none"/><rect x="5" y="21" width="16" height="2.600" fill="#9da0ae"/></svg>
<svg style="left:188px;top:2122px" width="30" height="32" viewBox="0 0 30 32"><path class="ic" style="stroke:#9da0ae;stroke-width:2" d="M8 12.500V3l20.500 11-10.500 6.500"/><path class="ic" style="stroke:#9da0ae;stroke-width:2" d="M6.500 18a2.600 2.600 0 0 1 5.200 0"/><ellipse class="ic" style="stroke:#9da0ae;stroke-width:2" cx="9" cy="23.500" rx="4.200" ry="5.500"/><path class="ic" style="stroke:#9da0ae;stroke-width:1.800" d="M5 21l-3.500-2.500M4.800 24H.8M5.500 27l-3.500 3M13 21l3.500-2.500M13.200 24h4M12.500 27l3.500 3"/></svg>
<div class="sb" style="left:2843px;">行 16<span style="letter-spacing:-3.500px">，</span>列 14</div>
<div class="sb" style="left:3002px;letter-spacing:-.7px">空格: 2</div>
<div class="sb" style="left:3098px;">UTF-8</div>
<div class="sb" style="left:3189px;">LF</div>
<div class="sb" style="left:3241px;font-size:27px;line-height:38px;letter-spacing:-.5px">{ }</div>
<div class="sb" style="left:3294px;">Dart</div>
<div class="sb" style="left:3364px;">nvm</div>
<svg style="left:3434px;top:2125px" width="26" height="22" viewBox="0 0 26 22"><path d="M1 11h14M8.500 4.500L15 11l-6.500 6.500M18 0v22M20.500 8.500L25 4.500M20.500 13.500L25 17.500" stroke="#9da0ae" stroke-width="2.400" fill="none"/></svg>
<div class="sb" style="left:3464px;letter-spacing:-1.200px">CUE</div>
<svg style="left:3540px;top:2123px" width="26" height="28" viewBox="0 0 26 28"><path class="ic" style="stroke:#9da0ae;stroke-width:2.400;stroke-linejoin:miter" d="M2 20.500h22l-1.500-9C22 5 18.500 1.500 13 1.500S4 5 3.500 11.500zM8 21a5 5 0 0 0 10 0"/></svg>
</div>
</body>
</html>
